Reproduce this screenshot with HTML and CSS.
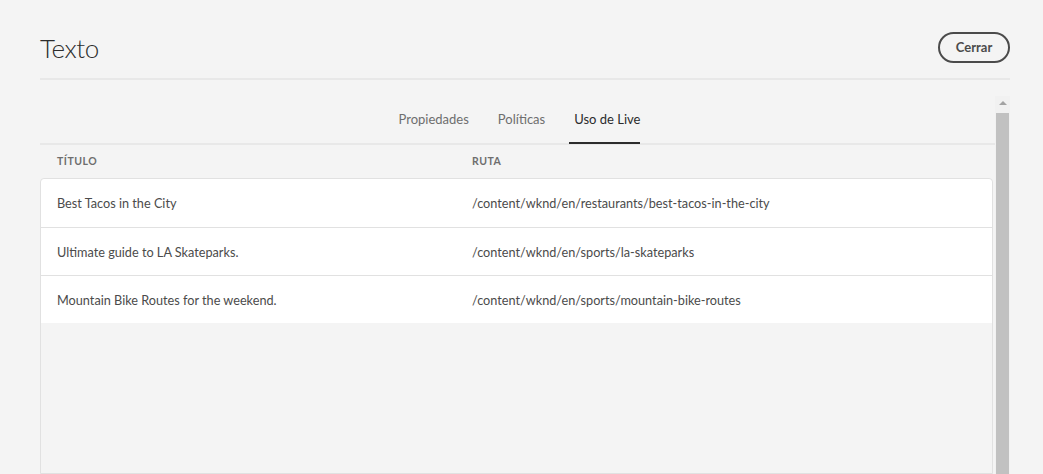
FILE: index.html
```html
<!DOCTYPE html>
<html lang="es">
<head>
<meta charset="utf-8">
<title>Texto</title>
<link rel="stylesheet" href="styles.css">
</head>
<body>
<div class="dialog">
  <header class="dialog-header">
    <h1 class="dialog-title">Texto</h1>
    <button class="btn-close" type="button">Cerrar</button>
  </header>
  <div class="dialog-body">
    <div class="content">
      <nav class="tabs">
        <span class="tab">Propiedades</span>
        <span class="tab">Políticas</span>
        <span class="tab tab-active">Uso de Live</span>
      </nav>
      <div class="table-head">
        <div class="col col-title">Título</div>
        <div class="col col-path">Ruta</div>
      </div>
      <div class="table-body">
        <div class="row">
          <div class="col col-title">Best Tacos in the City</div>
          <div class="col col-path">/content/wknd/en/restaurants/best-tacos-in-the-city</div>
        </div>
        <div class="row">
          <div class="col col-title">Ultimate guide to LA Skateparks.</div>
          <div class="col col-path">/content/wknd/en/sports/la-skateparks</div>
        </div>
        <div class="row">
          <div class="col col-title">Mountain Bike Routes for the weekend.</div>
          <div class="col col-path">/content/wknd/en/sports/mountain-bike-routes</div>
        </div>
      </div>
    </div>
    <div class="scrollbar">
      <div class="scroll-arrow"></div>
      <div class="scroll-thumb"></div>
    </div>
  </div>
</div>
</body>
</html>
```
FILE: styles.css
```css
html, body {
  margin: 0;
  padding: 0;
  height: 100%;
  background: #f4f4f4;
  overflow: hidden;
}
body {
  font-family: "Lato", "Open Sans", sans-serif;
  color: #4b4b4b;
}
.dialog {
  padding: 0 33px 0 40px;
  height: 100%;
  display: flex;
  flex-direction: column;
}
.dialog-header {
  display: flex;
  align-items: center;
  justify-content: space-between;
  box-sizing: border-box;
  height: 80px;
  padding-top: 16px;
  border-bottom: 2px solid #e8e8e8;
}
.dialog-title {
  margin: 0;
  font-size: 26px;
  font-weight: 300;
  color: #2c2c2c;
  line-height: 1;
  letter-spacing: -0.4px;
  padding-top: 2px;
}
.btn-close {
  font-family: "Lato", "Open Sans", sans-serif;
  font-size: 13px;
  font-weight: 700;
  color: #4b4b4b;
  background: transparent;
  border: 2px solid #4b4b4b;
  border-radius: 16px;
  height: 31px;
  width: 72px;
  padding: 0;
}
.dialog-body {
  flex: 1;
  display: flex;
  margin-top: 16px;
  min-height: 0;
}
.content {
  flex: 1;
  display: flex;
  flex-direction: column;
}
.tabs {
  display: flex;
  justify-content: center;
  gap: 29px;
  height: 49px;
  box-sizing: border-box;
  border-bottom: 2px solid #e8e8e8;
  padding-left: 4px;
}
.tab {
  font-size: 13px;
  color: #6e6e6e;
  display: flex;
  align-items: center;
  padding-bottom: 2px;
  position: relative;
}
.tab-active {
  color: #2c2c2c;
}
.tab-active::after {
  content: "";
  position: absolute;
  left: -5px;
  right: 0;
  bottom: -1px;
  height: 2px;
  background: #2c2c2c;
}
.table-head {
  display: flex;
  height: 33px;
  align-items: center;
  padding-right: 2px;
}
.table-head .col {
  font-size: 10.5px;
  font-weight: 700;
  text-transform: uppercase;
  letter-spacing: 0.5px;
  color: #6e6e6e;
  padding-bottom: 1px;
}
.col {
  box-sizing: border-box;
}
.col-title {
  width: 432px;
  padding-left: 17px;
}
.col-path {
  flex: 1;
}
.table-body {
  flex: 1;
  border: 1px solid #e1e1e1;
  border-radius: 4px 4px 0 0;
  margin-right: 2px;
  background: #f4f4f4;
}
.row {
  display: flex;
  align-items: center;
  height: 47px;
  background: #fff;
  border-bottom: 1px solid #e1e1e1;
  font-size: 12.7px;
  color: #4b4b4b;
}
.row:first-child {
  border-radius: 4px 4px 0 0;
  height: 48px;
}
.row:last-child {
  border-bottom: none;
}
.row .col-title {
  width: 431px;
  padding-left: 16px;
}
.scrollbar {
  width: 15px;
  background: #f1f1f1;
  display: flex;
  flex-direction: column;
  align-items: center;
}
.scroll-arrow {
  width: 0;
  height: 0;
  margin-top: 5px;
  border-left: 4px solid transparent;
  border-right: 4px solid transparent;
  border-bottom: 4px solid #a3a3a3;
}
.scroll-thumb {
  margin-top: 8px;
  width: 13px;
  flex: 1;
  background: #c1c1c1;
}
```
